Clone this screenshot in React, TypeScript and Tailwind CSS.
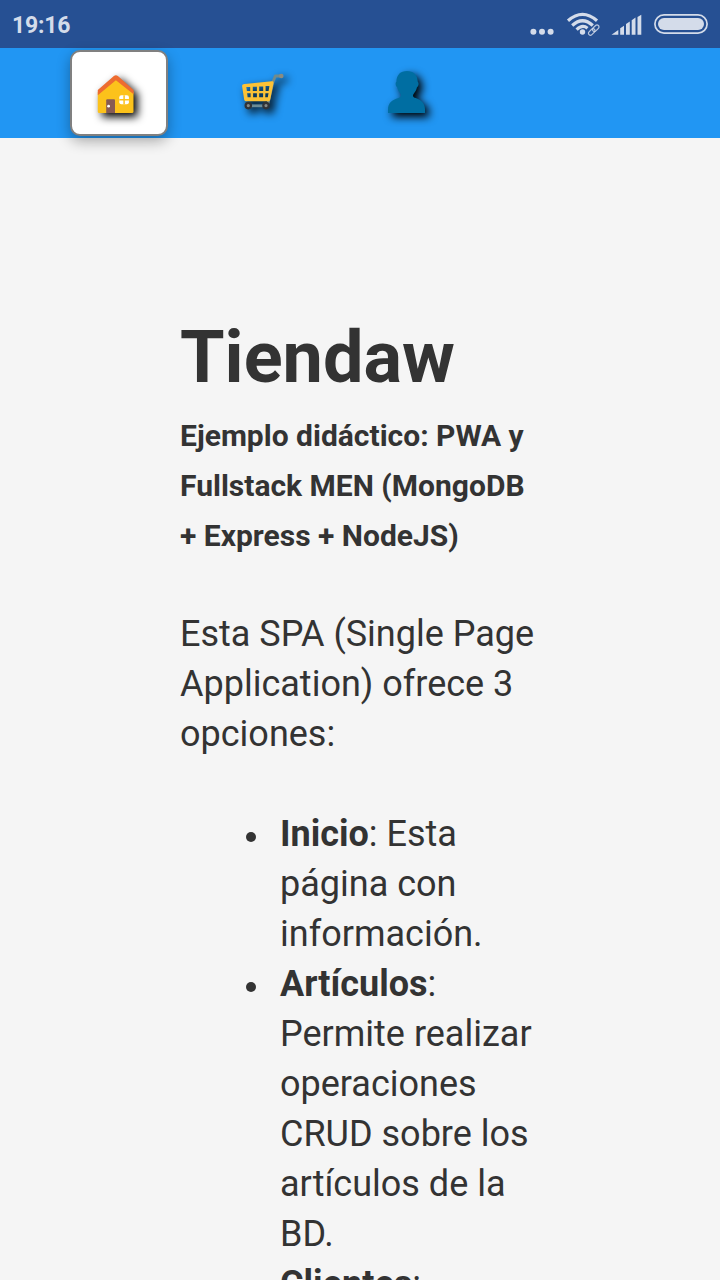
import React from "react";

function StatusBar() {
  return (
    <header className="flex h-12 items-center justify-between bg-[#265093] pl-3 text-[#d4dcea]">
      <span className="pt-1 text-[23px] leading-7 font-bold tracking-[-0.2px]">19:16</span>
      <svg className="h-12 w-[200px]" viewBox="0 0 200 48" fill="currentColor" aria-hidden="true">
        <circle cx="13.4" cy="31.7" r="3" />
        <circle cx="22" cy="31.7" r="3" />
        <circle cx="30.6" cy="31.7" r="3" />
        <g fill="none" stroke="currentColor" strokeWidth="3.2">
          <path d="M48 20.8Q62.5 8 77 20.8" />
          <path d="M52.2 25.5Q62.5 16 72.8 25.5" />
          <path d="M56.6 29.6Q62.5 24 67.5 28.3" />
        </g>
        <circle cx="62.5" cy="32" r="2.7" />
        <g fill="none" stroke="currentColor" strokeOpacity="0.85" strokeWidth="1.2">
          <rect x="-3.9" y="-2" width="7.6" height="4" rx="2" transform="translate(75.8 28.1) rotate(-45)" />
          <rect x="-3.9" y="-2" width="7.6" height="4" rx="2" transform="translate(71.8 31.9) rotate(-45)" />
        </g>
        <path d="M91.5 34.7 98.3 30v4.7zM100.2 28.3l3.8-2.6v9h-3.8zM106 24l3.8-2.6v13.3H106zM111.7 20.2l3.8-2.6v17.1h-3.8zM117.5 17l3.8-2.3v20h-3.8z" />
        <rect x="134.9" y="14.9" width="52.2" height="18.2" rx="9.1" fill="none" stroke="currentColor" strokeWidth="1.7" />
        <rect x="138" y="18" width="46" height="12" rx="6" />
      </svg>
    </header>
  );
}

function HouseIcon() {
  return (
    <svg className="mr-1 size-12 overflow-visible drop-shadow-[4px_4px_4px_#000]" viewBox="0 0 48 48" aria-hidden="true">
      <path d="M4.8 23 22.8 7 40.5 23v19.5q0 1.5-1.5 1.5H6.3q-1.5 0-1.5-1.5z" fill="#fcc21b" />
      <path d="M4.8 21 20.9 7q2-1.7 4 0L40.6 21v4.3L22.9 11.2 4.8 26.2z" fill="#ed6c30" />
      <path d="M13.2 31.2q0-1 1-1h6.8q1 0 1 1V44h-8.8z" fill="#875b54" />
      <circle cx="15.6" cy="37.2" r="1.4" fill="#fff" />
      <rect x="26.3" y="26.3" width="9.6" height="9" rx="2" fill="#fff" />
      <path d="M31.1 26.3v9M26.3 30.8h9.6" stroke="#fcc21b" strokeWidth="1.5" />
    </svg>
  );
}

function CartIcon() {
  return (
    <svg className="mr-[3px] size-12 overflow-visible drop-shadow-[4px_4px_4px_#000]" viewBox="0 0 48 48" aria-hidden="true">
      <path d="M40.5 7h-5.2l-2.4 6-4.1 18-1 4" fill="none" stroke="#708b8c" strokeWidth="2.8" strokeLinejoin="round" />
      <circle cx="41.3" cy="7" r="2.3" fill="#8b8c80" />
      <path d="M10 36.8h18" stroke="#6b8c96" strokeWidth="2.8" />
      <path fillRule="evenodd" fill="#fcc236" d="M4.5 15q-2.8.2-2.4 2.2l2.1 13.5q.4 1.6 2 1.6h22.5q1.2 0 1.5-1.8l3.3-16.5q.3-2-1.7-1.8zM6.3 18.1h3.9v3.9H6.9zM12.8 17.8h4.1v4.2h-4.1zM19.2 17.5h4v4.5h-4zM25.6 17.1h3.8l-.8 4.9h-3zM7.1 24.2h3.5v4.1H7.6zM13.1 24.2h3.8v4.1h-3.8zM19.2 24.2h3.9v4.1h-3.9zM25.4 24.2h3.2l-.8 4.1h-2.6z" />
      <circle cx="8.3" cy="36.6" r="2.7" fill="#858987" stroke="#303337" strokeWidth="2.2" />
      <circle cx="26" cy="36.6" r="2.7" fill="#858987" stroke="#303337" strokeWidth="2.2" />
    </svg>
  );
}

function PersonIcon() {
  return (
    <svg className="mr-2 size-12 overflow-visible drop-shadow-[4px_4px_4px_#000]" viewBox="0 0 48 48" aria-hidden="true">
      <path d="M5 44v-3.5c0-6.5 4-9.4 10.3-11.4 3.2-1 3.4-3 1.7-5-1.6-1.7-2.4-3.7-2.7-5.5q-1.7-1.2-1.7-3.5 0-1.8.8-2.3C13.4 6 17.4 2 24 2s10.5 4 10.8 10.8q.9.7.8 2.5-.1 2-1.7 3.3c-.4 2-1.3 4-2.8 5.6-1.7 1.8-1.5 4 1.5 4.9C38 31 42 34 42 40.5V44z" fill="#006ea2" />
    </svg>
  );
}

const tab = "flex h-[86px] w-[98px] items-center justify-center";
const item =
  "relative before:absolute before:top-[22.5px] before:-left-[34.5px] before:size-[10.5px] before:rounded-full before:bg-[#333]";

export default function App() {
  return (
    <div className="h-screen overflow-hidden bg-[#f5f5f5] font-[Roboto,sans-serif] text-[#333]">
      <StatusBar />
      <nav className="flex h-[90px] items-center gap-12 bg-[#2196f3] pl-[70px]">
        <button aria-label="Inicio" className={`${tab} rounded-[10px] border-2 border-[#808080] bg-white shadow-[0_5px_14px_rgba(0,0,0,0.32)]`}>
          <HouseIcon />
        </button>
        <button aria-label="Artículos" className={tab}><CartIcon /></button>
        <button aria-label="Clientes" className={tab}><PersonIcon /></button>
      </nav>
      <main className="mx-auto w-[360px] pt-[170px] text-4xl leading-[50px]">
        <h1 className="text-7xl leading-[100px] font-bold">Tiendaw</h1>
        <h3 className="mt-[3px] text-3xl leading-[50px] font-bold">
          Ejemplo didáctico: PWA y Fullstack MEN (MongoDB + Express + NodeJS)
        </h3>
        <p className="mt-12 leading-[50px]">Esta SPA (Single Page Application) ofrece 3 opciones:</p>
        <ul className="mt-[50px] ml-[100px] leading-[50px]">
          <li className={item}><b>Inicio</b>: Esta página con información.</li>
          <li className={item}><b>Artículos</b>: Permite realizar operaciones CRUD sobre los artículos de la BD.</li>
          <li className={item}><b>Clientes</b>: Permite realizar operaciones CRUD sobre los clientes de la BD.</li>
        </ul>
      </main>
    </div>
  );
}
